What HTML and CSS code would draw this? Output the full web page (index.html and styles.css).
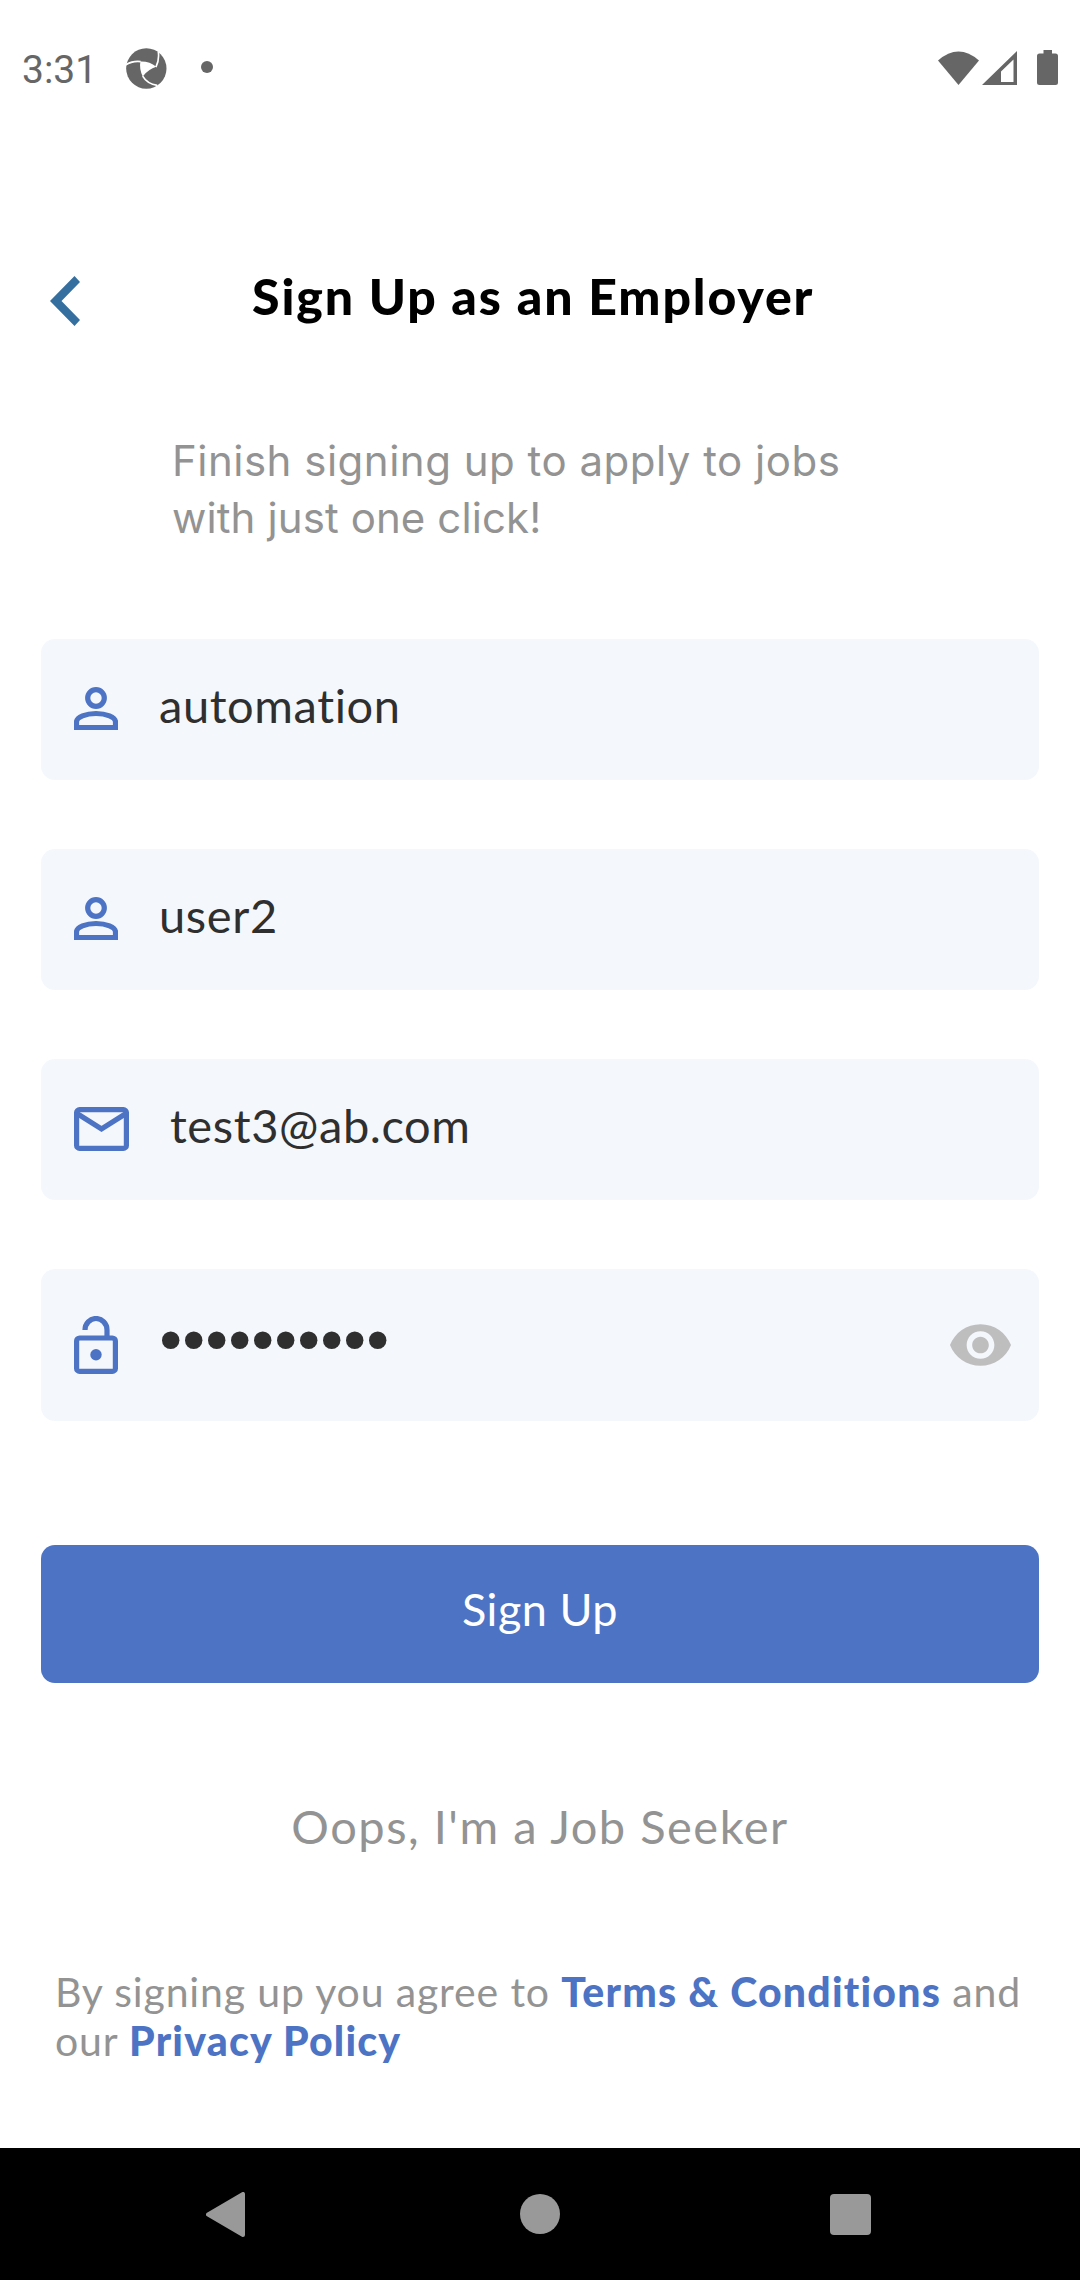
FILE: index.html
```html
<!DOCTYPE html>
<html lang="en">
<head>
<meta charset="utf-8">
<title>Sign Up as an Employer</title>
<link rel="stylesheet" href="styles.css">
</head>
<body>
<div class="screen">
  <header class="status">
    <span class="time">3:31</span>
    <svg class="aperture" viewBox="378 50 123 124"><circle cx="439" cy="112" r="61" fill="#666"/><path d="M421 91Q449 90 469 107Q446 114 428 136Q417 113 421 91Z" fill="#fff"/><path d="M468 108Q479 86 475 60M422 91Q396 88 376 102M428 135Q441 158 472 163" fill="none" stroke="#fff" stroke-width="5"/></svg>
    <span class="dot"></span>
    <span class="spacer"></span>
    <svg class="wifi" viewBox="0 0 41 34"><path d="M0 9.500Q20.500-8.500 41 9.500L20.500 34Z" fill="#666"/></svg>
    <svg class="signal" viewBox="0 0 35 34"><path fill-rule="evenodd" d="M35 0V34H0ZM31.500 8.500L19 20.500V31H31.500Z" fill="#666"/></svg>
    <svg class="battery" viewBox="0 0 21 35"><path d="M6.500 0H15V3.500H18.500Q21 3.500 21 6V32.500Q21 35 18.500 35H2.500Q0 35 0 32.500V6Q0 3.500 2.500 3.500H6.500Z" fill="#666"/></svg>
  </header>
  <main class="content">
    <div class="titlebar">
      <svg class="back" viewBox="0 0 30 50"><path d="M24.500 0L30 6L11.500 25L30 44L24.500 50L0 25Z" fill="#356f9f"/></svg>
      <h1 class="title">Sign Up as an Employer</h1>
    </div>
    <p class="subtitle"><span class="lead">Finish signing up to apply to jobs</span><br>with just one click!</p>
    <form class="form">
      <div class="field">
        <svg class="icon-person" viewBox="0 0 44 43"><circle cx="22" cy="11" r="8.300"/><path d="M2.500 40.500V35C2.500 30 12 26.500 22 26.500S41.500 30 41.500 35V40.500Z"/></svg>
        <span class="value">automation</span>
      </div>
      <div class="field">
        <svg class="icon-person" viewBox="0 0 44 43"><circle cx="22" cy="11" r="8.300"/><path d="M2.500 40.500V35C2.500 30 12 26.500 22 26.500S41.500 30 41.500 35V40.500Z"/></svg>
        <span class="value">user2</span>
      </div>
      <div class="field">
        <svg class="icon-mail" viewBox="0 0 55 44"><rect x="2.600" y="2.600" width="49.800" height="38.800" rx="3"/><path d="M3 6.500L27.500 22L52 6.500"/></svg>
        <span class="value">test3@ab.com</span>
      </div>
      <div class="field field-password">
        <svg class="icon-lock" viewBox="0 0 44 58"><rect x="2.600" y="22" width="38.800" height="33.400" rx="3"/><path d="M11 14A11 11.500 0 0 1 33 14V21"/><circle class="keyhole" cx="22" cy="38.700" r="5.700"/></svg>
        <span class="value dots">••••••••••</span>
        <svg class="icon-eye" viewBox="1 4.500 22 15"><path d="M12 4.500C7 4.500 2.730 7.610 1 12c1.730 4.390 6 7.500 11 7.500s9.270-3.110 11-7.500c-1.730-4.390-6-7.500-11-7.500zM12 17c-2.760 0-5-2.240-5-5s2.240-5 5-5 5 2.240 5 5-2.240 5-5 5zm0-8c-1.660 0-3 1.340-3 3s1.340 3 3 3 3-1.340 3-3-1.340-3-3-3z" fill="#bebebe"/></svg>
      </div>
      <div class="submit">Sign Up</div>
    </form>
    <p class="switch">Oops, I'm a Job Seeker</p>
    <p class="legal">By signing up you agree to <b>Terms &amp; Conditions</b> and<br>our <b>Privacy Policy</b></p>
  </main>
  <footer class="nav">
    <svg class="nav-back" viewBox="0 0 39 45"><path d="M37 2V43L2 22.500Z"/></svg>
    <svg class="nav-home" viewBox="0 0 40 40"><circle cx="20" cy="20" r="20"/></svg>
    <svg class="nav-recent" viewBox="0 0 41 41"><rect width="41" height="41" rx="4"/></svg>
  </footer>
</div>
</body>
</html>
```
FILE: styles.css
```css
* { box-sizing: border-box; }
body { margin: 0; background: #fff; font-family: Lato, "Liberation Sans", sans-serif; }
h1, p { margin: 0; }
svg { display: block; flex: none; }
.screen { width: 1080px; height: 2280px; display: flex; flex-direction: column; }

.status { height: 136px; flex: none; display: flex; align-items: center; padding: 0 22px; color: #666; }
.time { font: 39px/46px Roboto, sans-serif; width: 104px; padding-top: 3px; }
.aperture { width: 41px; height: 41px; }
.dot { width: 12px; height: 12px; border-radius: 50%; background: #666; margin: 0 0 2px 34px; }
.spacer { flex: 1; }
.wifi { width: 41px; height: 34px; margin-right: 3px; }
.signal { width: 35px; height: 34px; margin-right: 20px; }
.battery { width: 21px; height: 35px; margin-bottom: 2px; }

.content { flex: 1; padding: 120px 41px 0; }
.titlebar { height: 90px; display: flex; align-items: center; padding-left: 9px; }
.back { width: 30px; height: 50px; }
.title { flex: 1; padding: 0 0 10px 172px; font-size: 50px; line-height: 60px; font-weight: 900; letter-spacing: 1.9px; color: #000; white-space: nowrap; }
.subtitle { margin-top: 86px; padding-left: 131px; font: 42px/57px Inter, sans-serif; letter-spacing: 0.1px; color: #939393; }
.lead { letter-spacing: 0.5px; }

.form { margin-top: 93px; display: flex; flex-direction: column; gap: 69px; }
.field { height: 141px; border-radius: 14px; background: #f4f7fc; display: flex; align-items: center; padding: 0 28px 0 33px; }
.field-password { height: 152px; }
.value { flex: 1; margin-left: 41px; padding-bottom: 10px; font-size: 47px; line-height: 56px; letter-spacing: 0.6px; color: #2f2f2f; }
.dots { margin-left: 35px; padding-bottom: 6px; font-family: "DejaVu Sans", sans-serif; font-size: 60px; letter-spacing: -12.400px; white-space: nowrap; }
.icon-person, .icon-mail, .icon-lock { fill: none; stroke: #4c73c4; stroke-width: 5.200; }
.icon-person { width: 44px; height: 43px; margin-bottom: 2px; }
.icon-mail { width: 55px; height: 44px; margin-bottom: 2px; }
.icon-lock { width: 44px; height: 58px; }
.keyhole { fill: #4c73c4; stroke: none; }
.icon-eye { width: 61px; height: 42px; }
.submit { margin-top: 55px; height: 138px; border-radius: 14px; background: #4c73c4; color: #fff; font-size: 45px; line-height: 129px; letter-spacing: 0.5px; text-align: center; }
.switch { margin-top: 115px; text-align: center; font-size: 47px; line-height: 56px; letter-spacing: 1.500px; color: #939393; }
.legal { margin-top: 113px; padding-left: 14px; font-size: 41px; line-height: 49px; letter-spacing: 0.850px; color: #939393; white-space: nowrap; }
.legal b { color: #4c73c4; font-weight: 900; letter-spacing: 1.200px; }

.nav { height: 132px; flex: none; background: #000; display: flex; align-items: center; justify-content: space-between; padding: 0 209px 0 206px; fill: #999; }
.nav-back { width: 39px; height: 45px; stroke: #999; stroke-width: 4; stroke-linejoin: round; }
.nav-home { width: 40px; height: 40px; margin-left: 4px; }
.nav-recent { width: 41px; height: 41px; }
```
